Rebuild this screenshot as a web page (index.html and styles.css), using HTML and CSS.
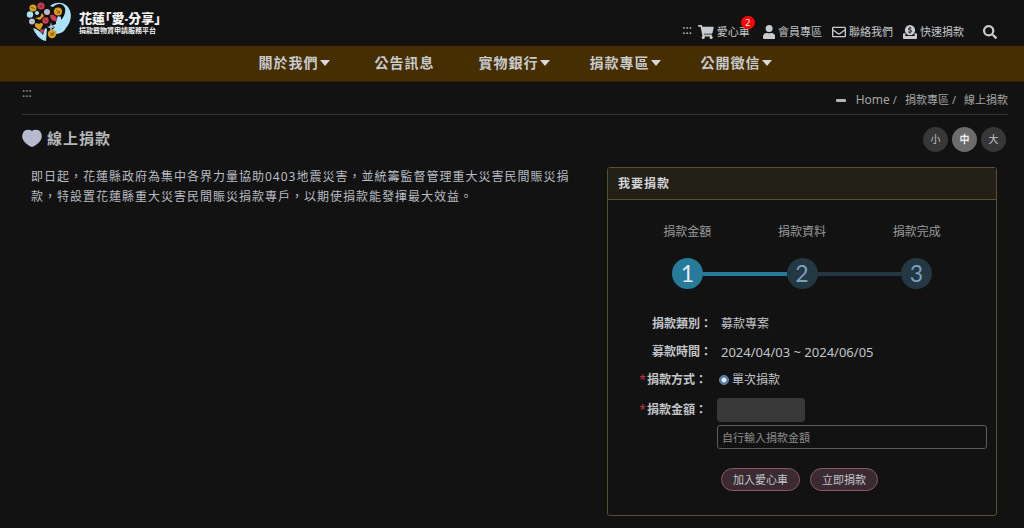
FILE: index.html
```html
<!DOCTYPE html>
<html lang="zh-Hant">
<head>
<meta charset="utf-8">
<meta name="viewport" content="width=device-width, initial-scale=1">
<title>線上捐款</title>
<link rel="stylesheet" href="styles.css">
</head>
<body>
<header class="header">
  <a class="brand" href="#">
    <svg class="brand-mark" viewBox="0 0 46 40" aria-hidden="true">
      <g fill="#a9e2f8">
        <path d="M24 4C30-1 38 0 42 5c5 7 3 15-2 21-2 4-5 5-9 6l-5-2 5-1-6 0 4-4-4-1 5-2 0-3 2-5 3 1 0 3c3-3 5-8 4-12-2-5-8-5-12-1z"/>
        <path d="M7 26c4 1 8 4 10 7l2-7 2 1-1 12C14 38 9 32 7 26z"/>
        <circle cx="4" cy="12.500" r="3.200"/><circle cx="11" cy="11" r="2"/>
      </g>
      <g fill="#dd9e1c">
        <circle cx="7" cy="6" r="3.600"/><circle cx="32" cy="9.500" r="4"/><circle cx="26" cy="32" r="4.200"/>
        <path d="M9 22c2-2 3 0 4 0 2-2 4-1 4 1l-3 5c-3-1-6-4-5-6zM9 16l5-1 2-4 2 3-4 4z"/>
      </g>
      <g fill="#d23b52"><circle cx="15" cy="4" r="3.600"/><circle cx="19.500" cy="18.500" r="3.200"/><path d="M24 13c4-1 7 1 7 6-4 1-7-2-7-6z"/><circle cx="16" cy="29" r="2"/></g>
      <g fill="#b9bdd0"><circle cx="21" cy="10" r="3"/><circle cx="6" cy="19.500" r="3"/><path d="M25 20l1 4 3 1-3 1-1 4-1-4-3-1 3-1z"/></g>
      <g fill="none" stroke="#573618" stroke-width=".7"><path d="M5 5l4 2M30 8l4 3M31 12l3-3M24 31l4 2M25 34l3-4M13 3l4 2M16 2l-2 4M18 17l3 3"/></g>
    </svg>
    <span class="brand-text"><strong class="brand-name">花蓮｢愛‧分享｣</strong><span class="brand-sub">捐款暨物資申請服務平台</span></span>
  </a>
  <nav class="tools" aria-label="工具">
    <a class="access" href="#">:::</a>
    <a class="tool tool-cart" href="#"><svg class="icon" viewBox="0 0 576 512" aria-hidden="true"><path d="M528 301l47-208c4-15-8-29-23-29H159l-9-45C148 8 138 0 127 0H24C11 0 0 11 0 24v16c0 13 11 24 24 24h70l70 343a56 56 0 1 0 67 9h210a56 56 0 1 0 64-11l5-25c4-15-8-29-23-29H218l-6-32h293c11 0 21-8 23-18z"/></svg>愛心車<span class="badge">2</span></a>
    <a class="tool" href="#"><svg class="icon" viewBox="0 0 448 512" aria-hidden="true"><path d="M224 256a128 128 0 1 0 0-256 128 128 0 0 0 0 256zm90 32h-17a174 174 0 0 1-146 0h-17C60 288 0 348 0 422v42c0 27 22 48 48 48h352c27 0 48-21 48-48v-42c0-74-60-134-134-134z"/></svg>會員專區</a>
    <a class="tool" href="#"><svg class="icon" viewBox="0 0 512 512" aria-hidden="true"><path fill-rule="evenodd" d="M464 64H48C22 64 0 86 0 112v288c0 27 22 48 48 48h416c27 0 48-21 48-48V112c0-26-21-48-48-48zm0 48v41c-22 18-58 47-134 106-17 13-50 45-74 45s-57-32-74-45C106 200 70 171 48 153v-41zM48 400V214c23 18 55 44 104 82 21 17 58 56 104 56s83-39 104-56c49-38 81-64 104-82v186z"/></svg>聯絡我們</a>
    <a class="tool" href="#"><svg class="icon" viewBox="0 0 512 512" aria-hidden="true"><path fill-rule="evenodd" d="M256 0a188 188 0 1 0 0 376 188 188 0 0 0 0-376zm-18 65h36v30c18 2 31 7 42 15l-19 29c-21-14-69-17-69 7 0 32 95 10 95 77 0 31-20 51-49 57v30h-36v-29c-23-3-40-10-53-22l22-29c23 20 76 24 76-2 0-34-94-12-94-78 0-28 19-47 49-54z"/><path d="M75 300H40c-22 0-40 18-40 40v132c0 22 18 40 40 40h432c22 0 40-18 40-40V340c0-22-18-40-40-40h-35c-12 23-27 43-46 60h40v45H81v-45h40c-19-17-34-37-46-60z"/></svg>快速捐款</a>
    <button class="search" type="button" aria-label="搜尋"><svg class="icon" viewBox="0 0 512 512" aria-hidden="true"><path fill-rule="evenodd" d="M505 443L405 343c-5-4-11-7-17-7h-16a208 208 0 1 0-36 36v16c0 7 3 13 7 17l100 100c9 9 24 9 34 0l28-28c9-10 9-25 0-34zM208 336a128 128 0 1 1 0-256 128 128 0 0 1 0 256z"/></svg></button>
  </nav>
</header>
<nav class="menu" aria-label="主選單">
  <a class="menu-item" href="#">關於我們<i class="caret"></i></a>
  <a class="menu-item menu-plain" href="#">公告訊息</a>
  <a class="menu-item" href="#">實物銀行<i class="caret"></i></a>
  <a class="menu-item" href="#">捐款專區<i class="caret"></i></a>
  <a class="menu-item" href="#">公開徵信<i class="caret"></i></a>
</nav>
<main class="main">
  <div class="topline">
    <a class="access" href="#">:::</a>
    <nav class="crumbs" aria-label="路徑"><i class="dash"></i><a class="home" href="#">Home</a><span class="slash">/</span><a href="#">捐款專區</a><span class="slash">/</span><a href="#">線上捐款</a></nav>
  </div>
  <div class="heading">
    <h1 class="title"><svg class="heart" viewBox="0 0 20 18" aria-hidden="true"><path d="M10 2C12 0 18 0 19 4c3 6-3 12-9 14C4 16-2 10 1 4 2 0 8 0 10 2z"/></svg>線上捐款</h1>
    <div class="sizes"><button class="size" type="button">小</button><button class="size size-on" type="button">中</button><button class="size" type="button">大</button></div>
  </div>
  <div class="content">
    <p class="intro">即日起，花蓮縣政府為集中各界力量協助0403地震災害，並統籌監督管理重大災害民間賑災捐款，特設置花蓮縣重大災害民間賑災捐款專戶，以期使捐款能發揮最大效益。</p>
    <section class="card">
      <h2 class="card-title">我要捐款</h2>
      <div class="steps">
        <div class="step-labels"><span>捐款金額</span><span>捐款資料</span><span>捐款完成</span></div>
        <div class="track"><span class="dot dot-on">1</span><i class="bar bar-on"></i><span class="dot">2</span><i class="bar"></i><span class="dot">3</span></div>
      </div>
      <form class="form">
        <div class="row"><span class="label">捐款類別：</span><span class="value">募款專案</span></div>
        <div class="row"><span class="label">募款時間：</span><span class="value value-date">2024/04/03 ~ 2024/06/05</span></div>
        <div class="row"><span class="label label-req"><b class="req">*</b>捐款方式：</span><label class="choice"><input class="radio" type="radio" name="mode" checked>單次捐款</label></div>
        <div class="row row-amount"><label class="label label-req" for="amount"><b class="req">*</b>捐款金額：</label>
          <div class="fields"><button class="preset" type="button" aria-label="金額"></button><input class="amount" id="amount" type="text" placeholder="自行輸入捐款金額"></div></div>
        <div class="actions"><button class="pill" type="button">加入愛心車</button><button class="pill" type="button">立即捐款</button></div>
      </form>
    </section>
  </div>
</main>
</body>
</html>
```
FILE: styles.css
```css
* { box-sizing: border-box; }
body {
  margin: 0;
  background: #121212;
  color: #c2c5ca;
  font: 12px/20px "Noto Sans", "Noto Sans CJK TC", sans-serif;
}
a { color: inherit; text-decoration: none; }
button, input { font: inherit; color: inherit; }
h1, h2, p { margin: 0; }

.header {
  display: flex;
  justify-content: space-between;
  height: 46px;
  padding: 0 24px 0 26px;
  border-bottom: 1px solid #1b1710;
}
.brand { display: flex; gap: 7px; padding-top: 2px; }
.brand-mark { width: 46px; height: 40px; }
.brand-text { display: flex; flex-direction: column; padding-top: 8px; color: #f2f2f2; white-space: nowrap; }
.brand-name { font-size: 13px; line-height: 16px; font-weight: 900; }
.brand-sub { font-size: 7px; line-height: 10px; font-weight: 700; }

.tools { display: flex; align-items: center; gap: 10px; padding-top: 18px; font-size: 11px; line-height: 14px; }
.access { font-size: 12px; color: #c2c5ca; }
.tools .access { margin-right: -4px; padding-bottom: 4px; }
.tool { position: relative; display: flex; align-items: center; gap: 3px; }
.tool-cart { margin-right: 3px; }
.icon { display: block; height: 14px; fill: #c8cbd0; }
.badge {
  position: absolute;
  top: -9px;
  right: -5px;
  width: 14px;
  height: 13px;
  border-radius: 7px;
  background: #fa0505;
  color: #fff;
  font-size: 9px;
  line-height: 13px;
  text-align: center;
}
.search { margin-left: 6px; padding: 0 3px; border: 0; background: none; }

.menu {
  display: flex;
  justify-content: center;
  gap: 40px;
  padding: 7px 0 8px 6px;
  background: #442e02;
  border-bottom: 1px solid #2b1f08;
}
.menu-item {
  display: flex;
  align-items: center;
  gap: 1px;
  color: #c9c9cd;
  font-size: 14px;
  font-weight: 700;
  letter-spacing: 1px;
}
.menu-plain { margin: 0 4px 0 5px; }
.caret { border: 5px solid transparent; border-top: 6px solid #d8d8da; border-bottom: 0; }

.main { padding: 0 16px 12px 22px; }
.topline {
  display: flex;
  justify-content: space-between;
  align-items: flex-start;
  height: 33px;
  border-bottom: 1px solid #343434;
}
.topline .access { padding-top: 1px; color: #9c9ea4; }
.crumbs { display: flex; align-items: center; gap: 8px; padding-top: 8px; font-size: 11px; color: #a3a3a3; }
.home { font-size: 12px; }
.dash { width: 10px; height: 3px; margin-right: 2px; border-radius: 1px; background: #b5b5b5; }
.slash { margin-left: -5px; }

.heading { display: flex; justify-content: space-between; align-items: flex-start; padding: 12px 2px 0 0; }
.title { display: flex; align-items: center; gap: 5px; font-size: 15px; line-height: 22px; font-weight: 700; letter-spacing: 1px; color: #b4b6ba; }
.heart { width: 20px; height: 18px; fill: #b8bbd0; }
.sizes { display: flex; gap: 4px; }
.size {
  width: 25px;
  height: 25px;
  padding: 0;
  border: 0;
  border-radius: 50%;
  background: #373737;
  font-size: 10px;
  line-height: 25px;
}
.size-on { background: #6c6c6c; color: #f0f0f0; font-weight: 700; }

.content { display: grid; grid-template-columns: 1fr 40%; gap: 18px; padding: 15px 11px 0 0; align-items: start; }
.intro { padding: 0 9px; letter-spacing: 1px; color: #b9bcc3; }
.card { border: 1px solid #595030; border-radius: 3px; }
.card-title {
  padding: 6px 10px 5px;
  border-bottom: 1px solid #595030;
  background: #232017;
  color: #d2d4d8;
  font-size: 12px;
  letter-spacing: 1px;
}
.steps { width: 344px; max-width: 100%; margin: 22px auto 0; color: #9a9a9a; }
.step-labels { display: grid; grid-template-columns: 1fr 1fr 1fr; text-align: center; }
.track { display: flex; align-items: center; padding: 16px 42px 0; }
.dot {
  width: 31px;
  height: 31px;
  border-radius: 50%;
  background: #233843;
  color: #7d9fbe;
  font: 400 23px/31px Lato, "Noto Sans", sans-serif;
  text-align: center;
}
.dot-on { background: #267a9a; color: #e9e9f4; }
.bar { flex: 1; height: 4px; background: #233843; }
.bar-on { background: #267a9a; }

.form { padding: 25px 9px 24px 13px; }
.row { display: grid; grid-template-columns: 91px 1fr; gap: 9px; margin-bottom: 8px; }
.label { text-align: right; font-weight: 700; white-space: nowrap; }
.label-req { padding-right: 5px; }
.req { color: #c3323a; font-weight: 400; margin-right: 1px; }
.value-date { font-size: 13px; }
.choice { display: flex; align-items: center; gap: 3px; }
.radio {
  appearance: none;
  width: 10px;
  height: 10px;
  margin: 0 0 0 -2px;
  border: 1px solid #6c93b5;
  border-radius: 50%;
  background: radial-gradient(circle, #dde8f2 0 2px, #49739b 3px);
}
.row-amount { gap: 5px; margin-bottom: 0; }
.row-amount .label { padding-top: 2px; }
.fields { display: grid; gap: 3px; }
.preset { width: 88px; height: 24px; border: 0; border-radius: 4px; background: #393939; }
.amount {
  width: 100%;
  height: 24px;
  padding: 0 4px;
  border: 1px solid #5b5b5b;
  border-radius: 3px;
  background: transparent;
  font-size: 11px;
}
.amount::placeholder { color: #8a8a8a; opacity: 1; }
.actions { display: flex; gap: 10px; padding: 19px 0 0 100px; }
.pill {
  height: 23px;
  padding: 0 11px;
  border: 1px solid #8d5962;
  border-radius: 12px;
  background: #3b2a31;
  font-size: 11px;
  line-height: 20px;
  white-space: nowrap;
}
```
